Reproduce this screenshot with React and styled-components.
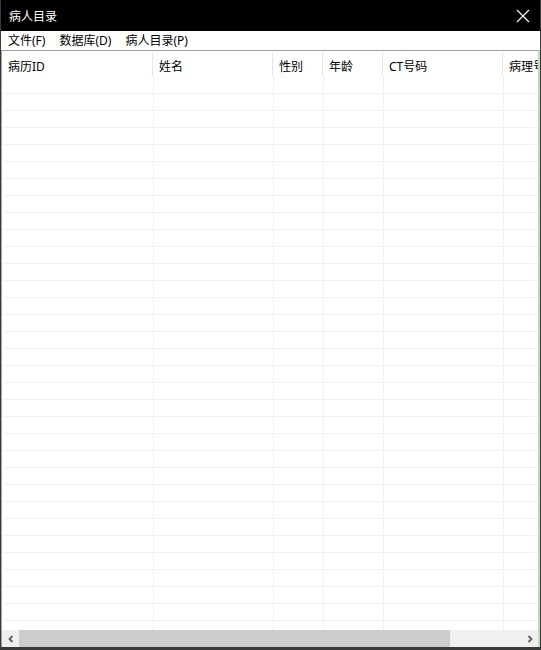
import React from "react";
import styled, { createGlobalStyle } from "styled-components";

const GlobalStyle = createGlobalStyle`
  html, body {
    margin: 0;
    padding: 0;
    background: #ffffff;
  }
  body {
    font-family: "Noto Sans", "Noto Sans CJK SC", sans-serif;
  }
`;

const columns = [
  { title: "病历ID", width: 151 },
  { title: "姓名", width: 120 },
  { title: "性别", width: 50 },
  { title: "年龄", width: 60 },
  { title: "CT号码", width: 120 },
  { title: "病理号", width: 120 },
];

const ROW_COUNT = 34;

const Window = styled.div`
  width: 541px;
  height: 650px;
  box-sizing: border-box;
  display: flex;
  flex-direction: column;
  background: #000;
  border-left: 1px solid #3a3a3a;
  border-right: 1px solid #3a3a3a;
  border-bottom: 3px solid #3a3a3a;
  overflow: hidden;
`;

const TitleBar = styled.div`
  height: 31px;
  flex: none;
  display: flex;
  align-items: center;
  justify-content: space-between;
  padding: 0 9px 0 8px;
  background: #000;
  color: #fff;
  font-size: 12px;
`;

const CloseButton = styled.div`
  width: 16px;
  height: 16px;
  display: flex;
  align-items: center;
  justify-content: center;
`;

const MenuBar = styled.div`
  height: 19px;
  flex: none;
  display: flex;
  align-items: center;
  padding-left: 0;
  background: #fff;
  font-size: 12px;
  color: #000;
`;

const MenuItem = styled.span`
  padding: 0 7px;
  line-height: 19px;
`;

const TableFrame = styled.div`
  flex: 1;
  min-height: 0;
  display: flex;
  flex-direction: column;
  background: #fff;
  border-top: 1px solid #a0a0a0;
  border-left: 1px solid #a0a0a0;
  border-right: 2px solid #b8e0b8;
  overflow: hidden;
`;

const Grid = styled.div`
  flex: 1;
  min-height: 0;
  overflow: hidden;
`;

const HeaderRow = styled.div`
  display: flex;
  height: 26px;
  background: #fff;
`;

const HeaderCell = styled.div`
  flex: none;
  box-sizing: border-box;
  width: ${(p) => p.$w}px;
  padding: 2px 0 0 6px;
  display: flex;
  align-items: center;
  font-size: 12px;
  color: #000;
  white-space: nowrap;
  border-right: 1px solid #e5e5e5;
  margin-top: 2px;
`;

const Row = styled.div`
  display: flex;
  height: 17px;
  margin-left: 1px;
`;

const Cell = styled.div`
  flex: none;
  box-sizing: border-box;
  width: ${(p) => p.$w}px;
  height: 17px;
  border-right: 1px solid #f0f0f0;
  border-bottom: 1px solid #f0f0f0;
`;

const ScrollBar = styled.div`
  height: 17px;
  flex: none;
  display: flex;
  align-items: stretch;
  background: #f0f0f0;
`;

const ArrowButton = styled.div`
  width: 17px;
  flex: none;
  display: flex;
  align-items: center;
  justify-content: center;
`;

const Track = styled.div`
  flex: 1;
  display: flex;
  align-items: stretch;
`;

const Thumb = styled.div`
  background: #cdcdcd;
`;

const Chevron = ({ dir }) => (
  <svg width="8" height="8" viewBox="0 0 8 8">
    <path
      d={dir === "left" ? "M5.5 1 L2.5 4 L5.5 7" : "M2.5 1 L5.5 4 L2.5 7"}
      fill="none"
      stroke="#606060"
      strokeWidth="1.8"
    />
  </svg>
);

export default function App() {
  const rows = Array.from({ length: ROW_COUNT });
  return (
    <>
      <GlobalStyle />
      <Window>
        <TitleBar>
          <span>病人目录</span>
          <CloseButton>
            <svg width="14" height="14" viewBox="0 0 14 14">
              <path d="M1 1 L13 13 M13 1 L1 13" stroke="#fff" strokeWidth="1.1" />
            </svg>
          </CloseButton>
        </TitleBar>
        <MenuBar>
          <MenuItem>文件(F)</MenuItem>
          <MenuItem>数据库(D)</MenuItem>
          <MenuItem>病人目录(P)</MenuItem>
        </MenuBar>
        <TableFrame>
          <Grid>
            <HeaderRow>
              {columns.map((c) => (
                <HeaderCell key={c.title} $w={c.width}>
                  {c.title}
                </HeaderCell>
              ))}
            </HeaderRow>
            {rows.map((_, i) => (
              <Row key={i}>
                {columns.map((c) => (
                  <Cell key={c.title} $w={c.width} />
                ))}
              </Row>
            ))}
          </Grid>
          <ScrollBar>
            <ArrowButton>
              <Chevron dir="left" />
            </ArrowButton>
            <Track>
              <Thumb style={{ width: `${(429 / 500) * 100}%` }} />
            </Track>
            <ArrowButton>
              <Chevron dir="right" />
            </ArrowButton>
          </ScrollBar>
        </TableFrame>
      </Window>
    </>
  );
}
